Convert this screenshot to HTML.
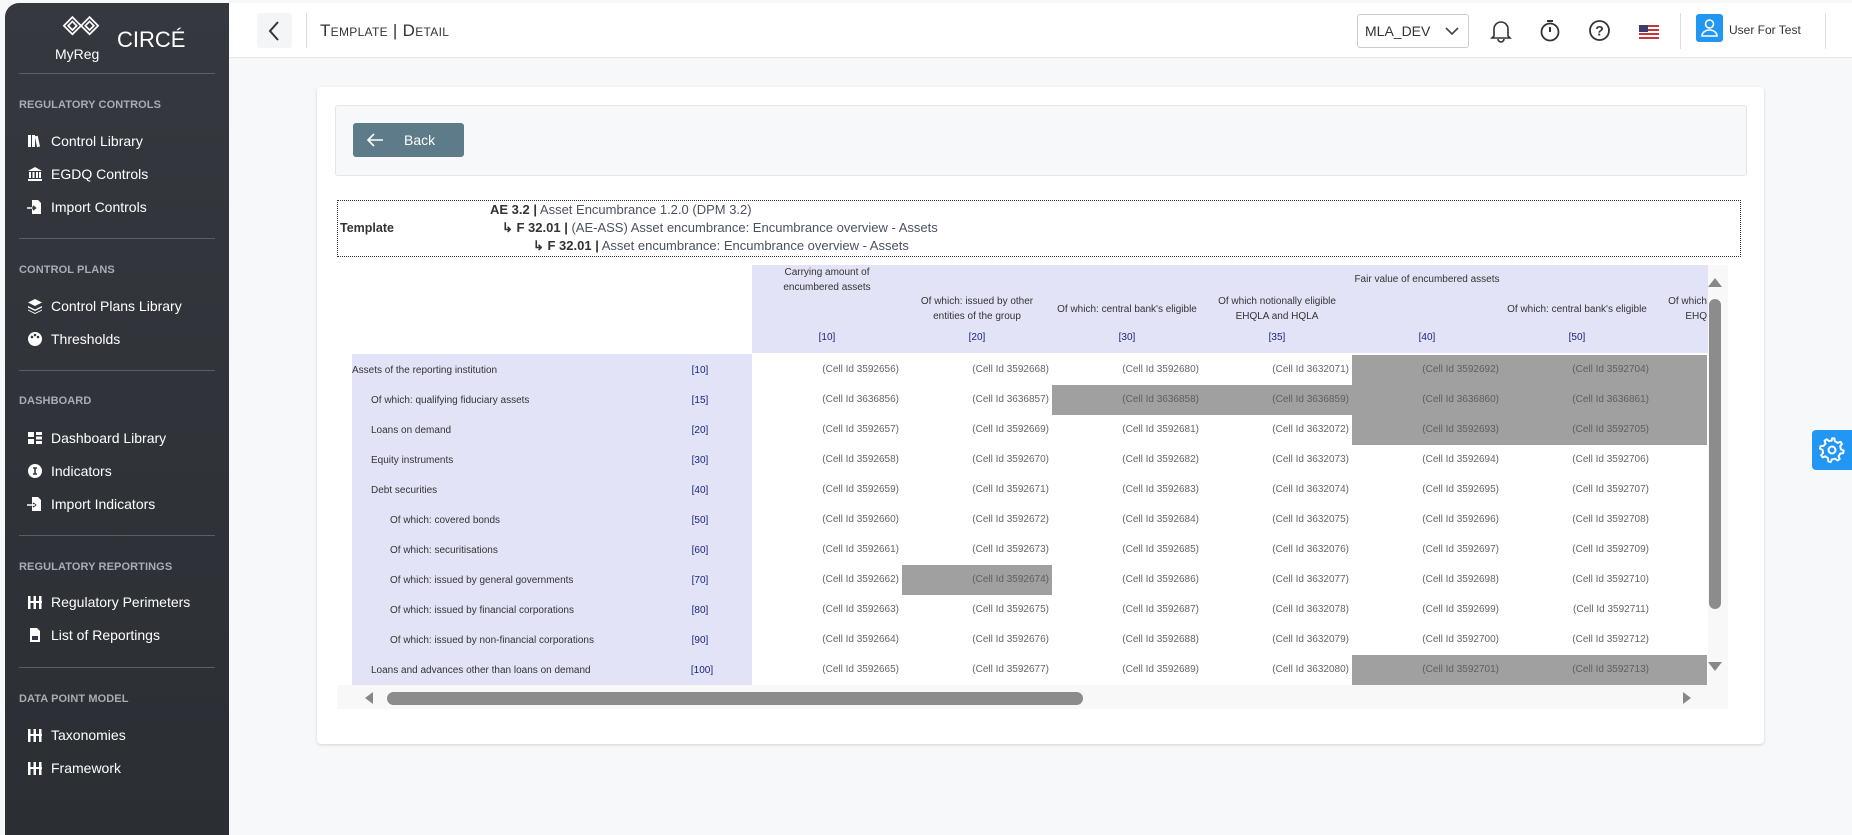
<!DOCTYPE html>
<html><head><meta charset="utf-8">
<style>
*{box-sizing:border-box;margin:0;padding:0}
body{width:1852px;height:835px;overflow:hidden;background:#f7f8fa;font-family:"Liberation Sans",sans-serif;position:relative}
.abs{position:absolute}
#side{left:5px;top:3px;width:224px;height:832px;background:linear-gradient(#35393f,#2b2f34);border-radius:14px 0 0 0}
.sec{position:absolute;left:14px;font-size:11px;font-weight:bold;color:#a9adb3;letter-spacing:0.1px}
.it{position:absolute;left:22px;font-size:14px;color:#fff;display:flex;align-items:center}
.it svg{width:16px;height:16px;margin-right:8px}
.hr{position:absolute;left:14px;width:196px;height:1px;background:#5a5f66}
#hdr{left:229px;top:3px;width:1623px;height:55px;background:#fff;border-bottom:1px solid #e4e6ea}
.lab{position:absolute;font-size:10px;color:#333;white-space:nowrap}
.code{position:absolute;font-size:10px;color:#1a237e;width:40px;text-align:center}
.cell{position:absolute;width:150px;height:30px;font-size:10px;color:#666;text-align:right;padding-right:3px;line-height:30px}
.g{background:#a0a0a0;color:#5e5e5e}
.hd{position:absolute;font-size:10px;color:#333;text-align:center;line-height:15px}
</style></head><body>
<div id="side" class="abs">
 <svg class="abs" style="left:57px;top:12px" width="38" height="30" viewBox="0 0 34 28"><g fill="none" stroke="#fff" stroke-width="1.6"><path d="M9 2 L17 10 L9 18 L1 10 Z"/><path d="M25 2 L33 10 L25 18 L17 10 Z"/><path d="M9 6 L13 10 L9 14 L5 10Z"/><path d="M25 6 L29 10 L25 14 L21 10Z"/></g></svg>
 <div class="abs" style="left:50px;top:43px;color:#fff;font-size:14px">MyReg</div>
 <div class="abs" style="left:112px;top:24px;color:#fff;font-size:22px">CIRCÉ</div>
 <div class="hr" style="top:70px"></div>
 <div class="sec" style="top:96px">REGULATORY CONTROLS</div>
 <div class="it" style="top:130px"><svg viewBox="0 0 16 16" fill="#fff"><rect x="1" y="2" width="3" height="12"/><rect x="5" y="2" width="3" height="12"/><rect x="9" y="3" width="3" height="11" transform="rotate(-12 10 9)"/></svg>Control Library</div>
 <div class="it" style="top:163px"><svg viewBox="0 0 16 16" fill="#fff"><path d="M8 1 L15 5 H1 Z"/><rect x="2" y="6" width="2" height="6"/><rect x="5.5" y="6" width="2" height="6"/><rect x="9" y="6" width="2" height="6"/><rect x="12" y="6" width="2" height="6"/><rect x="1" y="13" width="14" height="2"/></svg>EGDQ Controls</div>
 <div class="it" style="top:196px"><svg viewBox="0 0 16 16" fill="#fff"><path d="M5 1 H11 L14 4 V15 H5 Z"/><path d="M0 9 H8 M6 7 L8.5 9 L6 11" stroke="#35393f" stroke-width="1.5"/><path d="M0 9 H5" stroke="#fff" stroke-width="1.5"/></svg>Import Controls</div>
 <div class="hr" style="top:235px"></div>
 <div class="sec" style="top:261px">CONTROL PLANS</div>
 <div class="it" style="top:295px"><svg viewBox="0 0 16 16" fill="#fff"><path d="M8 1 L15 4.5 L8 8 L1 4.5Z"/><path d="M1 8 L8 11.5 L15 8 L15 9.5 L8 13 L1 9.5Z"/><path d="M1 11.5 L8 15 L15 11.5 V12.5 L8 16 L1 12.5Z"/></svg>Control Plans Library</div>
 <div class="it" style="top:328px"><svg viewBox="0 0 16 16"><circle cx="8" cy="8" r="7" fill="#fff"/><circle cx="5" cy="6" r="1.3" fill="#35393f"/><circle cx="8" cy="4" r="1.3" fill="#35393f"/><circle cx="11" cy="6" r="1.3" fill="#35393f"/></svg>Thresholds</div>
 <div class="hr" style="top:367px"></div>
 <div class="sec" style="top:392px">DASHBOARD</div>
 <div class="it" style="top:427px"><svg viewBox="0 0 16 16" fill="#fff"><rect x="1" y="2" width="6" height="5"/><rect x="1" y="9" width="6" height="5"/><rect x="9" y="2" width="6" height="3"/><rect x="9" y="6.5" width="6" height="3"/><rect x="9" y="11" width="6" height="3"/></svg>Dashboard Library</div>
 <div class="it" style="top:460px"><svg viewBox="0 0 16 16"><circle cx="8" cy="8" r="7" fill="#fff"/><path d="M6 5 H10 M8 5 V11 M6 11 H10" stroke="#35393f" stroke-width="1.6"/></svg>Indicators</div>
 <div class="it" style="top:493px"><svg viewBox="0 0 16 16" fill="#fff"><path d="M5 1 H11 L14 4 V15 H5 Z"/><path d="M6 7 L8.5 9 L6 11" stroke="#35393f" stroke-width="1.5" fill="none"/><path d="M0 9 H8" stroke="#fff" stroke-width="1.5"/></svg>Import Indicators</div>
 <div class="hr" style="top:532px"></div>
 <div class="sec" style="top:558px">REGULATORY REPORTINGS</div>
 <div class="it" style="top:591px"><svg viewBox="0 0 16 16" fill="#fff"><rect x="1" y="2" width="2.5" height="13"/><rect x="6.5" y="2" width="2.5" height="13"/><rect x="12" y="2" width="2.5" height="13"/><rect x="1" y="7" width="14" height="2"/></svg>Regulatory Perimeters</div>
 <div class="it" style="top:624px"><svg viewBox="0 0 16 16" fill="#fff"><path d="M3 1 H10 L13 4 V15 H3Z"/><rect x="5" y="9" width="6" height="4" fill="#35393f"/></svg>List of Reportings</div>
 <div class="hr" style="top:664px"></div>
 <div class="sec" style="top:690px">DATA POINT MODEL</div>
 <div class="it" style="top:724px"><svg viewBox="0 0 16 16" fill="#fff"><rect x="1" y="2" width="2.5" height="13"/><rect x="6.5" y="2" width="2.5" height="13"/><rect x="12" y="2" width="2.5" height="13"/><rect x="1" y="7" width="14" height="2"/></svg>Taxonomies</div>
 <div class="it" style="top:757px"><svg viewBox="0 0 16 16" fill="#fff"><rect x="1" y="2" width="2.5" height="13"/><rect x="6.5" y="2" width="2.5" height="13"/><rect x="12" y="2" width="2.5" height="13"/><rect x="1" y="7" width="14" height="2"/></svg>Framework</div>
</div>

<div id="hdr" class="abs"></div>
<div class="abs" style="left:257px;top:13px;width:35px;height:35px;background:#f4f5f7;border-radius:3px"></div>
<svg class="abs" style="left:266px;top:19px" width="16" height="24" viewBox="0 0 16 24"><path d="M12 3 L4 12 L12 21" stroke="#333" stroke-width="2" fill="none"/></svg>
<div class="abs" style="left:306px;top:13px;width:1px;height:35px;background:#ddd"></div>
<div class="abs" style="left:320px;top:21px;font-size:17px;color:#333;font-variant:small-caps;letter-spacing:0.3px">Template | Detail</div>
<div class="abs" style="left:1357px;top:14px;width:112px;height:34px;border:1px solid #ccc;border-radius:3px;background:#fff"></div>
<div class="abs" style="left:1365px;top:23px;font-size:14px;color:#333">MLA_DEV</div>
<svg class="abs" style="left:1445px;top:26px" width="14" height="10" viewBox="0 0 14 10"><path d="M1 2 L7 8 L13 2" stroke="#444" stroke-width="1.6" fill="none"/></svg>
<svg class="abs" style="left:1490px;top:19px" width="22" height="24" viewBox="0 0 22 24"><path d="M4 17 V10 A7 7 0 0 1 18 10 V17 L20 19 H2 Z M8 20 A3 3 0 0 0 14 20" stroke="#333" stroke-width="1.6" fill="none"/></svg>
<svg class="abs" style="left:1539px;top:18px" width="22" height="25" viewBox="0 0 22 25"><circle cx="11" cy="14" r="8.5" stroke="#333" stroke-width="1.8" fill="none"/><path d="M8 3 H14 M11 9 V14" stroke="#333" stroke-width="2"/></svg>
<svg class="abs" style="left:1588px;top:19px" width="23" height="23" viewBox="0 0 23 23"><circle cx="11.5" cy="11.5" r="9.5" stroke="#333" stroke-width="1.8" fill="none"/><text x="11.5" y="16.5" font-size="14" font-family="Liberation Sans" text-anchor="middle" fill="#333" font-weight="bold">?</text></svg>
<svg class="abs" style="left:1639px;top:25px" width="20" height="14" viewBox="0 0 20 14"><rect width="20" height="14" fill="#fff"/><g fill="#c8363c"><rect y="0" width="20" height="2"/><rect y="4" width="20" height="2"/><rect y="8" width="20" height="2"/><rect y="12" width="20" height="2"/></g><rect width="9" height="7" fill="#3c3b6e"/></svg>
<div class="abs" style="left:1680px;top:13px;width:1px;height:36px;background:#ddd"></div>
<div class="abs" style="left:1696px;top:14px;width:27px;height:28px;background:#2196f3;border-radius:3px"></div>
<svg class="abs" style="left:1700px;top:17px" width="19" height="22" viewBox="0 0 19 22"><circle cx="9.5" cy="7" r="4" stroke="#fff" stroke-width="1.6" fill="none"/><path d="M2 19 A7.5 6 0 0 1 17 19 Z" stroke="#fff" stroke-width="1.6" fill="none"/></svg>
<div class="abs" style="left:1729px;top:23px;font-size:12px;color:#333">User For Test</div>
<div class="abs" style="left:1825px;top:13px;width:1px;height:36px;background:#ddd"></div>

<div class="abs" style="left:317px;top:87px;width:1447px;height:657px;background:#fff;border-radius:4px;box-shadow:0 1px 3px rgba(0,0,0,0.15)"></div>
<div class="abs" style="left:335px;top:105px;width:1412px;height:71px;background:#f7f8fa;border:1px solid #e3e5e8;border-radius:3px"></div>
<div class="abs" style="left:353px;top:123px;width:111px;height:34px;background:#5d7b88;border-radius:3px"></div>
<svg class="abs" style="left:366px;top:132px" width="18" height="16" viewBox="0 0 18 16"><path d="M17 8 H2 M8 2 L2 8 L8 14" stroke="#fff" stroke-width="1.6" fill="none"/></svg>
<div class="abs" style="left:404px;top:132px;font-size:14px;color:#fff">Back</div>

<div class="abs" style="left:337px;top:200px;width:1404px;height:57px;border:1px dotted #333"></div>
<div class="abs" style="left:340px;top:221px;font-size:12.5px;color:#333;font-weight:bold">Template</div>
<div class="abs" style="left:490px;top:202px;font-size:13px;color:#4a5260"><b style="color:#333">AE 3.2 |</b> Asset Encumbrance 1.2.0 (DPM 3.2)</div>
<div class="abs" style="left:502px;top:220px;font-size:13px;color:#4a5260"><b style="color:#333">↳ F 32.01 |</b> (AE-ASS) Asset encumbrance: Encumbrance overview - Assets</div>
<div class="abs" style="left:533px;top:238px;font-size:13px;color:#4a5260"><b style="color:#333">↳ F 32.01 |</b> Asset encumbrance: Encumbrance overview - Assets</div>

<div class="abs" style="left:337px;top:265px;width:1391px;height:444px;background:#f8f8f8;overflow:hidden">
 <div class="abs" style="left:0;top:0;width:1371px;height:420px;background:#fff"></div>
 <div class="abs" style="left:415px;top:0;width:956px;height:88px;background:#e3e3f8"></div>
 <div class="abs" style="left:15px;top:89px;width:400px;height:331px;background:#e3e3f8"></div>
</div>
<div class="abs" style="left:752px;top:265px;width:955px;height:88px">
 <div class="hd" style="left:0;top:0;width:150px">Carrying amount of<br>encumbered assets</div>
 <div class="hd" style="left:450px;top:7px;width:450px;padding-left:0">Fair value of encumbered assets</div>
 <div class="hd" style="left:150px;top:29px;width:150px">Of which: issued by other<br>entities of the group</div>
 <div class="hd" style="left:300px;top:37px;width:150px">Of which: central bank's eligible</div>
 <div class="hd" style="left:450px;top:29px;width:150px">Of which notionally eligible<br>EHQLA and HQLA</div>
 <div class="hd" style="left:750px;top:37px;width:150px">Of which: central bank's eligible</div>
 <div class="hd" style="left:906px;top:29px;width:49px;overflow:hidden;white-space:nowrap;text-align:right">Of which<br>EHQ</div>
 <div class="code" style="left:55px;top:67px">[10]</div>
 <div class="code" style="left:205px;top:67px">[20]</div>
 <div class="code" style="left:355px;top:67px">[30]</div>
 <div class="code" style="left:505px;top:67px">[35]</div>
 <div class="code" style="left:655px;top:67px">[40]</div>
 <div class="code" style="left:805px;top:67px">[50]</div>
</div>
<svg class="abs" style="left:1706px;top:275px" width="18" height="14" viewBox="0 0 18 14"><path d="M2 12 L9 3 L16 12Z" fill="#888"/></svg>
<div class="abs" style="left:1709px;top:299px;width:12px;height:310px;background:#8c8c8c;border-radius:6px"></div>
<svg class="abs" style="left:1706px;top:660px" width="18" height="14" viewBox="0 0 18 14"><path d="M2 2 L9 11 L16 2Z" fill="#888"/></svg>
<svg class="abs" style="left:362px;top:690px" width="14" height="16" viewBox="0 0 14 16"><path d="M11 2 L3 8 L11 14Z" fill="#888"/></svg>
<div class="abs" style="left:387px;top:692px;width:696px;height:13px;background:#8c8c8c;border-radius:7px"></div>
<svg class="abs" style="left:1680px;top:690px" width="14" height="16" viewBox="0 0 14 16"><path d="M3 2 L11 8 L3 14Z" fill="#888"/></svg>

<div class="abs" style="left:1812px;top:430px;width:40px;height:40px;background:#2196f3;border-radius:4px 0 0 4px"></div>
<svg class="abs" style="left:1818px;top:436px" width="28" height="28" viewBox="0 0 24 24"><path d="M12 2 L14 2 L14.5 4.6 A7.5 7.5 0 0 1 16.8 5.9 L19.3 5 L20.6 6.8 L19 8.9 A7.5 7.5 0 0 1 19.6 11.4 L22 12.5 L21.6 14.7 L19 15 A7.5 7.5 0 0 1 17.6 17.3 L18.6 19.7 L16.8 21 L14.7 19.4 A7.5 7.5 0 0 1 12 20 L10.9 22.3 L8.8 21.7 L8.6 19 A7.5 7.5 0 0 1 6.4 17.4 L3.9 18.3 L2.7 16.5 L4.4 14.4 A7.5 7.5 0 0 1 4 12 L1.6 10.8 L2.2 8.7 L4.8 8.5 A7.5 7.5 0 0 1 6.5 6.5 L5.6 4 L7.4 2.8 L9.5 4.4 A7.5 7.5 0 0 1 11.8 4 Z" fill="none" stroke="#fff" stroke-width="1.7" stroke-linejoin="round"/><circle cx="12" cy="12" r="3" fill="none" stroke="#fff" stroke-width="1.7"/></svg>

<div class="abs" style="left:0;top:355px">
<div class="lab" style="left:352px;top:10px">Assets of the reporting institution</div><div class="code" style="left:680px;top:10px">[10]</div>
<div class="lab" style="left:371px;top:40px">Of which: qualifying fiduciary assets</div><div class="code" style="left:680px;top:40px">[15]</div>
<div class="lab" style="left:371px;top:70px">Loans on demand</div><div class="code" style="left:680px;top:70px">[20]</div>
<div class="lab" style="left:371px;top:100px">Equity instruments</div><div class="code" style="left:680px;top:100px">[30]</div>
<div class="lab" style="left:371px;top:130px">Debt securities</div><div class="code" style="left:680px;top:130px">[40]</div>
<div class="lab" style="left:390px;top:160px">Of which: covered bonds</div><div class="code" style="left:680px;top:160px">[50]</div>
<div class="lab" style="left:390px;top:190px">Of which: securitisations</div><div class="code" style="left:680px;top:190px">[60]</div>
<div class="lab" style="left:390px;top:220px">Of which: issued by general governments</div><div class="code" style="left:680px;top:220px">[70]</div>
<div class="lab" style="left:390px;top:250px">Of which: issued by financial corporations</div><div class="code" style="left:680px;top:250px">[80]</div>
<div class="lab" style="left:390px;top:280px">Of which: issued by non-financial corporations</div><div class="code" style="left:680px;top:280px">[90]</div>
<div class="lab" style="left:371px;top:310px">Loans and advances other than loans on demand</div><div class="code" style="left:682px;top:310px">[100]</div>

<div class="abs g" style="left:1352px;top:0;width:355px;height:30px"></div>
<div class="abs g" style="left:1052px;top:30px;width:655px;height:30px"></div>
<div class="abs g" style="left:1352px;top:60px;width:355px;height:30px"></div>
<div class="abs g" style="left:902px;top:210px;width:150px;height:30px"></div>
<div class="abs g" style="left:1352px;top:300px;width:355px;height:30px"></div>

<div class="cell" style="left:752px;top:0">(Cell Id 3592656)</div><div class="cell" style="left:902px;top:0">(Cell Id 3592668)</div><div class="cell" style="left:1052px;top:0">(Cell Id 3592680)</div><div class="cell" style="left:1202px;top:0">(Cell Id 3632071)</div><div class="cell g" style="left:1352px;top:0">(Cell Id 3592692)</div><div class="cell g" style="left:1502px;top:0">(Cell Id 3592704)</div>
<div class="cell" style="left:752px;top:30px">(Cell Id 3636856)</div><div class="cell" style="left:902px;top:30px">(Cell Id 3636857)</div><div class="cell g" style="left:1052px;top:30px">(Cell Id 3636858)</div><div class="cell g" style="left:1202px;top:30px">(Cell Id 3636859)</div><div class="cell g" style="left:1352px;top:30px">(Cell Id 3636860)</div><div class="cell g" style="left:1502px;top:30px">(Cell Id 3636861)</div>
<div class="cell" style="left:752px;top:60px">(Cell Id 3592657)</div><div class="cell" style="left:902px;top:60px">(Cell Id 3592669)</div><div class="cell" style="left:1052px;top:60px">(Cell Id 3592681)</div><div class="cell" style="left:1202px;top:60px">(Cell Id 3632072)</div><div class="cell g" style="left:1352px;top:60px">(Cell Id 3592693)</div><div class="cell g" style="left:1502px;top:60px">(Cell Id 3592705)</div>
<div class="cell" style="left:752px;top:90px">(Cell Id 3592658)</div><div class="cell" style="left:902px;top:90px">(Cell Id 3592670)</div><div class="cell" style="left:1052px;top:90px">(Cell Id 3592682)</div><div class="cell" style="left:1202px;top:90px">(Cell Id 3632073)</div><div class="cell" style="left:1352px;top:90px">(Cell Id 3592694)</div><div class="cell" style="left:1502px;top:90px">(Cell Id 3592706)</div>
<div class="cell" style="left:752px;top:120px">(Cell Id 3592659)</div><div class="cell" style="left:902px;top:120px">(Cell Id 3592671)</div><div class="cell" style="left:1052px;top:120px">(Cell Id 3592683)</div><div class="cell" style="left:1202px;top:120px">(Cell Id 3632074)</div><div class="cell" style="left:1352px;top:120px">(Cell Id 3592695)</div><div class="cell" style="left:1502px;top:120px">(Cell Id 3592707)</div>
<div class="cell" style="left:752px;top:150px">(Cell Id 3592660)</div><div class="cell" style="left:902px;top:150px">(Cell Id 3592672)</div><div class="cell" style="left:1052px;top:150px">(Cell Id 3592684)</div><div class="cell" style="left:1202px;top:150px">(Cell Id 3632075)</div><div class="cell" style="left:1352px;top:150px">(Cell Id 3592696)</div><div class="cell" style="left:1502px;top:150px">(Cell Id 3592708)</div>
<div class="cell" style="left:752px;top:180px">(Cell Id 3592661)</div><div class="cell" style="left:902px;top:180px">(Cell Id 3592673)</div><div class="cell" style="left:1052px;top:180px">(Cell Id 3592685)</div><div class="cell" style="left:1202px;top:180px">(Cell Id 3632076)</div><div class="cell" style="left:1352px;top:180px">(Cell Id 3592697)</div><div class="cell" style="left:1502px;top:180px">(Cell Id 3592709)</div>
<div class="cell" style="left:752px;top:210px">(Cell Id 3592662)</div><div class="cell g" style="left:902px;top:210px">(Cell Id 3592674)</div><div class="cell" style="left:1052px;top:210px">(Cell Id 3592686)</div><div class="cell" style="left:1202px;top:210px">(Cell Id 3632077)</div><div class="cell" style="left:1352px;top:210px">(Cell Id 3592698)</div><div class="cell" style="left:1502px;top:210px">(Cell Id 3592710)</div>
<div class="cell" style="left:752px;top:240px">(Cell Id 3592663)</div><div class="cell" style="left:902px;top:240px">(Cell Id 3592675)</div><div class="cell" style="left:1052px;top:240px">(Cell Id 3592687)</div><div class="cell" style="left:1202px;top:240px">(Cell Id 3632078)</div><div class="cell" style="left:1352px;top:240px">(Cell Id 3592699)</div><div class="cell" style="left:1502px;top:240px">(Cell Id 3592711)</div>
<div class="cell" style="left:752px;top:270px">(Cell Id 3592664)</div><div class="cell" style="left:902px;top:270px">(Cell Id 3592676)</div><div class="cell" style="left:1052px;top:270px">(Cell Id 3592688)</div><div class="cell" style="left:1202px;top:270px">(Cell Id 3632079)</div><div class="cell" style="left:1352px;top:270px">(Cell Id 3592700)</div><div class="cell" style="left:1502px;top:270px">(Cell Id 3592712)</div>
<div class="cell" style="left:752px;top:300px">(Cell Id 3592665)</div><div class="cell" style="left:902px;top:300px">(Cell Id 3592677)</div><div class="cell" style="left:1052px;top:300px">(Cell Id 3592689)</div><div class="cell" style="left:1202px;top:300px">(Cell Id 3632080)</div><div class="cell g" style="left:1352px;top:300px">(Cell Id 3592701)</div><div class="cell g" style="left:1502px;top:300px">(Cell Id 3592713)</div>
</div>
</body></html>
